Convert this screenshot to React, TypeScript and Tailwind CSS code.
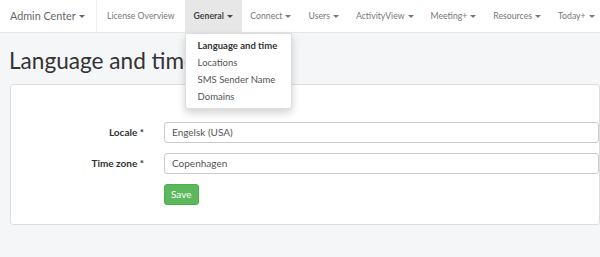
function Caret() {
  return <span className="ml-[3px] inline-block h-0 w-0 shrink-0 border-x-[3px] border-t-[3px] border-x-transparent border-t-current align-middle" />;
}

const navItems = ["Connect", "Users", "ActivityView", "Meeting+", "Resources", "Today+"];

export default function App() {
  return (
    <div className="relative h-[257px] w-[600px] overflow-hidden bg-[#f5f6f8] font-['Lato',sans-serif]">
      <nav className="flex h-[33px] items-stretch whitespace-nowrap border-b border-[#e7e7e7] bg-white text-[8.7px] text-[#777]">
        <div className="flex w-[97px] shrink-0 items-center border-r border-[#eee] pl-[10px] text-[10.8px] text-[#666]">
          Admin Center<Caret />
        </div>
        <div className="flex shrink-0 items-center px-[10px]">License Overview</div>
        <div className="relative flex shrink-0 items-center bg-[#e7e7e7] px-[9px] font-bold text-[#444]">
          General<Caret />
          <div className="absolute left-0 top-[33px] z-10 flex w-[107px] flex-col rounded-b-[3px] border border-[#ddd] bg-white py-[3px] text-[9.5px] font-normal text-[#555] shadow-[0_4px_8px_rgba(0,0,0,0.18)]">
            <div className="px-[12px] leading-[17px] font-bold text-[#333]">Language and time</div>
            <div className="px-[12px] leading-[17px]">Locations</div>
            <div className="px-[12px] leading-[17px]">SMS Sender Name</div>
            <div className="px-[12px] leading-[17px]">Domains</div>
          </div>
        </div>
        {navItems.map((n) => (
          <div key={n} className="flex shrink-0 items-center px-[8.5px]">
            {n}
            <Caret />
          </div>
        ))}
      </nav>

      <h1 className="ml-[9px] mt-[10px] text-[22.6px] leading-[36px] font-normal text-[#333]">Language and time</h1>

      <div className="ml-[10px] mt-[5px] rounded-[3px] border border-[#ddd] bg-white pb-[19px] pt-[37px] text-[10px]">
        <div className="flex items-center">
          <label className="w-[133px] shrink-0 text-right font-bold text-[#333]">Locale *</label>
          <div className="ml-[20px] flex h-[21px] flex-1 items-center rounded-[3px] border border-[#ccc] px-[7px] text-[#555]">Engelsk (USA)</div>
        </div>
        <div className="mt-[10px] flex items-center">
          <label className="w-[133px] shrink-0 text-right font-bold text-[#333]">Time zone *</label>
          <div className="ml-[20px] flex h-[21px] flex-1 items-center rounded-[3px] border border-[#ccc] px-[7px] text-[#555]">Copenhagen</div>
        </div>
        <div className="ml-[153px] mt-[10px]">
          <button className="h-[21px] rounded-[3px] border border-[#4cae4c] bg-[#5cb85c] px-[6px] text-[10px] text-white">
            Save
          </button>
        </div>
      </div>
    </div>
  );
}
